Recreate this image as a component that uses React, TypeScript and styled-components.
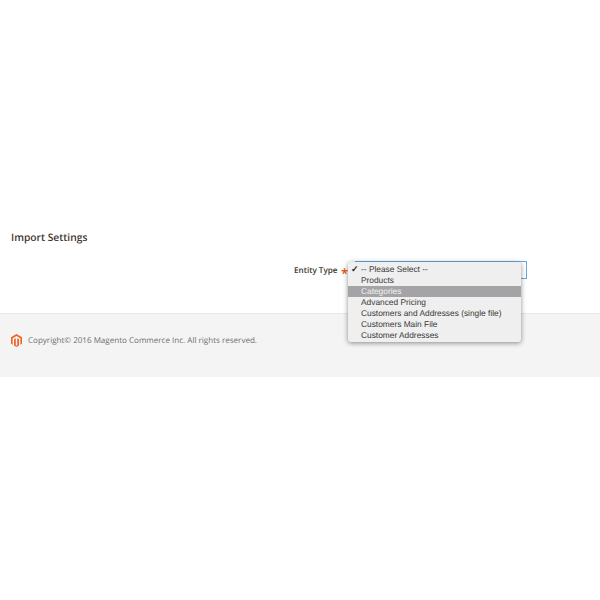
import React from 'react';
import styled, { createGlobalStyle } from 'styled-components';

const GlobalStyle = createGlobalStyle`
  html, body {
    margin: 0;
    padding: 0;
    background: #fff;
  }
  body {
    font-family: "Open Sans", "Liberation Sans", sans-serif;
    text-rendering: geometricPrecision;
  }
`;

const Page = styled.div`
  width: 600px;
  height: 600px;
  overflow: hidden;
  display: flex;
  flex-direction: column;
  background: #fff;
`;

const Content = styled.main`
  height: 314px;
  box-sizing: border-box;
  padding: 231px 0 0 11px;
  border-bottom: 1px solid #e6e6e6;
`;

const SectionTitle = styled.h2`
  margin: 0;
  font-size: 10.25px;
  line-height: 14px;
  font-weight: 600;
  color: #41362f;
`;

const FieldRow = styled.div`
  display: flex;
  align-items: flex-start;
  margin-top: 16px;
  padding-left: 283px;
`;

const FieldLabel = styled.label`
  width: 43px;
  font-size: 8.15px;
  line-height: 20px;
  font-weight: 600;
  color: #41362f;
  white-space: nowrap;
`;

const Required = styled.span`
  margin-left: 4px;
  width: 8px;
  font-size: 13px;
  font-weight: 600;
  line-height: 24px;
  color: #eb5202;
`;

const SelectWrap = styled.div`
  position: relative;
  margin-left: 6px;
  width: 172px;
  height: 18px;
  box-sizing: border-box;
  border: 1px solid #68a8e0;
  background: #fff;
`;

const Menu = styled.ul`
  position: absolute;
  top: 0;
  left: -8px;
  width: 173px;
  margin: 0;
  padding: 2px 0 1px;
  list-style: none;
  background: #efefef;
  border-radius: 3px;
  box-shadow: 0 1px 5px rgba(0, 0, 0, 0.45);
  font-family: "Liberation Sans", Arial, sans-serif;
`;

const MenuItem = styled.li<{ $active?: boolean }>`
  position: relative;
  height: 11px;
  padding-left: 13px;
  font-size: 8.35px;
  line-height: 11px;
  white-space: nowrap;
  color: ${({ $active }) => ($active ? '#f0f0f0' : '#3a3a3a')};
  background: ${({ $active }) => ($active ? '#a4a4a7' : 'transparent')};
`;

const Check = styled.span`
  position: absolute;
  left: 3px;
  top: 0;
  font-size: 9px;
  font-weight: 700;
  color: #222;
`;

const Footer = styled.footer`
  height: 63px;
  box-sizing: border-box;
  display: flex;
  align-items: flex-start;
  gap: 6px;
  padding: 20px 0 0 11px;
  background: #f4f4f4;
`;

const Copyright = styled.span`
  font-size: 8.05px;
  line-height: 14px;
  color: #6f6f6f;
  white-space: nowrap;
`;

const Logo = () => (
  <svg width="11" height="13" viewBox="0 0 24 28" aria-hidden="true">
    <path
      fill="#f26322"
      d="M12 0 0 7v14l3.6 2.1V9.1L12 4.2l8.4 4.9v14l3.6-2.1V7L12 0zm-1.6 9.2L6.6 11.4V25l5.4 3 5.4-3V11.4l-3.8-2.2v15.2L12 25.3l-1.6-.9V9.2z"
    />
  </svg>
);

const options = [
  'Products',
  'Categories',
  'Advanced Pricing',
  'Customers and Addresses (single file)',
  'Customers Main File',
  'Customer Addresses',
];

const App = () => (
  <Page>
    <GlobalStyle />
    <Content>
      <SectionTitle>Import Settings</SectionTitle>
      <FieldRow>
        <FieldLabel>Entity Type</FieldLabel>
        <Required>*</Required>
        <SelectWrap>
          <Menu>
            <MenuItem>
              <Check>✓</Check>
              -- Please Select --
            </MenuItem>
            {options.map((option) => (
              <MenuItem key={option} $active={option === 'Categories'}>
                {option}
              </MenuItem>
            ))}
          </Menu>
        </SelectWrap>
      </FieldRow>
    </Content>
    <Footer>
      <Logo />
      <Copyright>Copyright© 2016 Magento Commerce Inc. All rights reserved.</Copyright>
    </Footer>
  </Page>
);

export default App;
